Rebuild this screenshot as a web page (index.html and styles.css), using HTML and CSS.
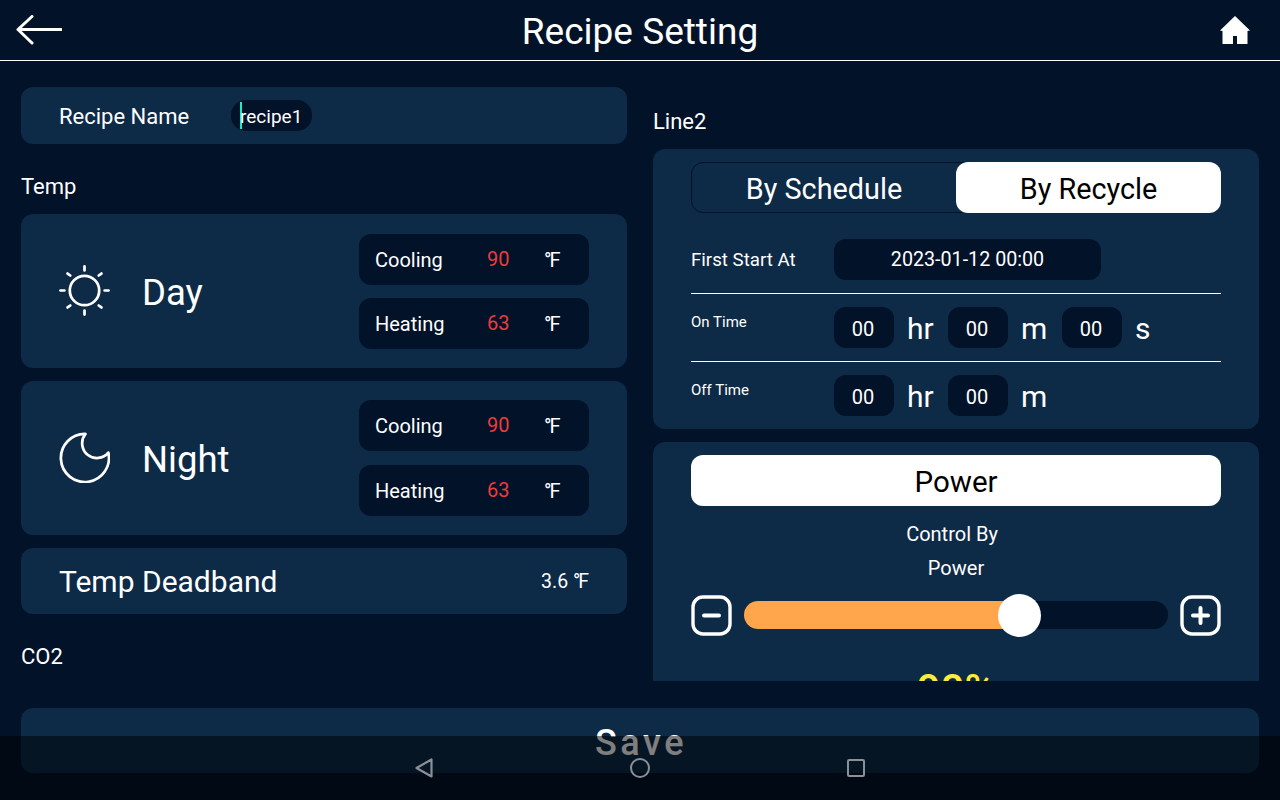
FILE: index.html
```html
<!DOCTYPE html>
<html lang="en">
<head>
    <meta charset="UTF-8">
    <title>Recipe Setting</title>
    <link rel="stylesheet" href="styles.css">
</head>
<body>
    <header class="topbar">
        <svg class="back-icon" width="46" height="30" viewBox="0 0 46 30">
            <path d="M45 14.500H2M16 1.500L2 14.500L16 28" fill="none" stroke="#fff" stroke-width="3" stroke-linecap="round" stroke-linejoin="round"/>
        </svg>
        <h1 class="title">Recipe Setting</h1>
        <svg class="home-icon" width="30" height="28" viewBox="0 0 30 28">
            <path d="M15 0L30 14.500L27.500 15V28H17V20H13V28H2.500V15L0 14.500Z" fill="#fff"/>
        </svg>
    </header>

    <main class="content">
        <section class="column left-column">
            <div class="card name-card">
                <span class="name-label">Recipe Name</span>
                <span class="name-pill"><span class="caret">recipe1</span></span>
            </div>

            <div class="section-label temp-label">Temp</div>

            <div class="card period-card">
                <svg class="period-icon" width="51" height="51" viewBox="0 0 52 52">
                    <g fill="none" stroke="#fff" stroke-width="2.800" stroke-linecap="round">
                        <circle cx="26" cy="26" r="15"/>
                        <path d="M26 1.500V5.500M26 46.500V50.500M1.500 26H5.500M46.500 26H50.500M8.700 8.700L11.500 10.700M40.500 41.300L43.300 43.300M43.300 8.700L40.500 10.700M11.500 41.300L8.700 43.300"/>
                    </g>
                </svg>
                <span class="period-name">Day</span>
                <div class="temp-pills">
                    <div class="temp-pill"><span class="temp-name">Cooling</span><span class="temp-value">90</span><span class="temp-unit">°F</span></div>
                    <div class="temp-pill"><span class="temp-name">Heating</span><span class="temp-value">63</span><span class="temp-unit">°F</span></div>
                </div>
            </div>

            <div class="card period-card night-card">
                <svg class="period-icon" width="51" height="51" viewBox="0 0 52 52">
                    <path d="M27 2A24.500 24.500 0 1 0 50.300 21A15 15 0 0 1 27 2Z" fill="none" stroke="#fff" stroke-width="2.800" stroke-linejoin="round"/>
                </svg>
                <span class="period-name">Night</span>
                <div class="temp-pills">
                    <div class="temp-pill"><span class="temp-name">Cooling</span><span class="temp-value">90</span><span class="temp-unit">°F</span></div>
                    <div class="temp-pill"><span class="temp-name">Heating</span><span class="temp-value">63</span><span class="temp-unit">°F</span></div>
                </div>
            </div>

            <div class="card deadband-card">
                <span class="deadband-name">Temp Deadband</span>
                <span class="deadband-value">3.6 <span class="temp-unit">°F</span></span>
            </div>

            <div class="section-label co2-label">CO2</div>
        </section>

        <section class="column right-column">
            <div class="section-label line-label">Line2</div>

            <div class="card schedule-card">
                <div class="toggle">
                    <span class="toggle-option">By Schedule</span>
                    <span class="toggle-option active">By Recycle</span>
                </div>
                <div class="row first-row">
                    <span class="row-label">First Start At</span>
                    <span class="date-pill">2023-01-12 00:00</span>
                </div>
                <div class="row time-row">
                    <span class="row-label small">On Time</span>
                    <span class="time-pill">00</span><span class="time-unit">hr</span>
                    <span class="time-pill">00</span><span class="time-unit">m</span>
                    <span class="time-pill">00</span><span class="time-unit">s</span>
                </div>
                <div class="row time-row">
                    <span class="row-label small">Off Time</span>
                    <span class="time-pill">00</span><span class="time-unit">hr</span>
                    <span class="time-pill">00</span><span class="time-unit">m</span>
                </div>
            </div>

            <div class="card power-card">
                <div class="power-button">Power</div>
                <div class="control-by">Control By</div>
                <div class="control-value">Power</div>
                <div class="slider-row">
                    <svg class="step-icon" width="41" height="41" viewBox="0 0 41 41">
                        <rect x="2" y="2" width="37" height="37" rx="10" fill="none" stroke="#fff" stroke-width="3.400"/>
                        <path d="M13 20.500H28" stroke="#fff" stroke-width="4" stroke-linecap="round"/>
                    </svg>
                    <div class="track">
                        <div class="fill"><span class="thumb"></span></div>
                    </div>
                    <svg class="step-icon" width="41" height="41" viewBox="0 0 41 41">
                        <rect x="2" y="2" width="37" height="37" rx="10" fill="none" stroke="#fff" stroke-width="3.400"/>
                        <path d="M13 20.500H28M20.500 13V28" stroke="#fff" stroke-width="4" stroke-linecap="round"/>
                    </svg>
                </div>
                <div class="power-percent">90%</div>
            </div>
        </section>
    </main>

    <div class="save-bar">Save</div>

    <nav class="system-nav">
        <svg width="18" height="20" viewBox="0 0 18 20">
            <path d="M16.500 1.500V18.500L1.500 10Z" fill="none" stroke="#8b9096" stroke-width="2.200" stroke-linejoin="round"/>
        </svg>
        <svg width="20" height="20" viewBox="0 0 20 20">
            <circle cx="10" cy="10" r="9" fill="none" stroke="#8b9096" stroke-width="2"/>
        </svg>
        <svg width="18" height="18" viewBox="0 0 18 18">
            <rect x="1" y="1" width="16" height="16" rx="1" fill="none" stroke="#8b9096" stroke-width="2"/>
        </svg>
    </nav>
</body>
</html>
```

FILE: styles.css
```css
body {
    font-family: 'Roboto', sans-serif;
    background-color: #011229;
    color: #fff;
    width: 1280px;
    height: 800px;
    margin: 0;
    overflow: hidden;
    position: relative;
}
.topbar {
    box-sizing: border-box;
    height: 61px;
    border-bottom: 1px solid #fff;
    display: grid;
    grid-template-columns: 1fr auto 1fr;
    align-items: center;
}
.back-icon {
    margin-left: 16px;
}
.home-icon {
    justify-self: end;
    margin-right: 30px;
}
.title {
    margin: 0;
    padding-top: 3px;
    font-size: 37px;
    font-weight: 400;
}
.content {
    height: 620px;
    overflow: hidden;
    display: flex;
    gap: 26px;
    padding: 0 21px;
}
.column {
    width: 606px;
    flex: none;
}
.card {
    background: #0d2a47;
    border-radius: 12px;
}
.section-label {
    font-size: 22px;
    display: flex;
    align-items: center;
}
.left-column {
    padding-top: 26px;
}
.name-card {
    height: 57px;
    display: flex;
    align-items: center;
    padding-left: 38px;
}
.name-label {
    width: 172px;
    padding-top: 2px;
    font-size: 22px;
}
.name-pill {
    box-sizing: border-box;
    width: 81px;
    height: 31px;
    border-radius: 15px;
    background: #011229;
    padding-left: 9px;
    font-size: 19px;
    display: flex;
    align-items: center;
}
.caret {
    border-left: 2px solid #1de9c6;
    margin-right: -2px;
    height: 27px;
    line-height: 29px;
    text-indent: -2px;
}
.temp-label {
    height: 70px;
    box-sizing: border-box;
    padding-top: 14px;
}
.period-card {
    height: 154px;
    margin-bottom: 13px;
    padding: 0 38px;
    display: flex;
    align-items: center;
}
.period-icon {
    flex: none;
    margin: 0 32px 2px 0;
}
.period-name {
    font-size: 36.5px;
    padding-top: 2px;
    flex: 1;
}
.temp-pills {
    align-self: flex-start;
    padding-top: 20px;
    display: flex;
    flex-direction: column;
    gap: 13px;
}
.night-card .temp-pills {
    padding-top: 19px;
    gap: 14px;
}
.temp-pill {
    width: 230px;
    height: 51px;
    box-sizing: border-box;
    padding: 1px 0 0 16px;
    border-radius: 12px;
    background: #011229;
    display: flex;
    align-items: center;
    font-size: 20px;
}
.temp-name {
    width: 112px;
}
.temp-value {
    width: 57px;
    color: #ee3b3b;
    padding-bottom: 3px;
}
.temp-unit {
    letter-spacing: -2px;
}
.deadband-card {
    height: 66px;
    padding: 0 38px;
    display: flex;
    align-items: center;
    justify-content: space-between;
}
.deadband-name {
    font-size: 30px;
}
.deadband-value {
    font-size: 19.5px;
    padding-right: 2px;
}
.co2-label {
    height: 84px;
}
.line-label {
    height: 88px;
    box-sizing: border-box;
    padding-top: 33px;
}
.schedule-card {
    height: 280px;
    box-sizing: border-box;
    padding: 13px 38px 0;
    margin-bottom: 13px;
}
.toggle {
    display: flex;
    height: 51px;
    box-sizing: border-box;
    border: 1px solid #011229;
    border-radius: 12px;
    margin-bottom: 13px;
}
.toggle-option {
    width: 264px;
    flex: none;
    font-size: 28.8px;
    padding-top: 2px;
    display: flex;
    align-items: center;
    justify-content: center;
}
.toggle-option.active {
    width: 265px;
    background: #fff;
    color: #000;
    border-radius: 12px;
    margin: -1px -1px -1px 0;
}
.row {
    display: flex;
    align-items: center;
    padding-top: 13px;
    height: 41px;
    padding-bottom: 13px;
    border-bottom: 1px solid #fff;
}
.row:last-child {
    border-bottom: none;
}
.row-label {
    width: 143px;
    flex: none;
    font-size: 18.7px;
}
.row-label.small {
    font-size: 15px;
    padding-bottom: 11px;
}
.date-pill {
    width: 267px;
    height: 41px;
    border-radius: 12px;
    background: #011229;
    font-size: 19.7px;
    display: flex;
    align-items: center;
    justify-content: center;
}
.time-pill {
    width: 60px;
    height: 41px;
    flex: none;
    box-sizing: border-box;
    padding: 2px 2px 0 0;
    border-radius: 12px;
    background: #011229;
    font-size: 20px;
    display: flex;
    align-items: center;
    justify-content: center;
}
.time-unit {
    width: 54px;
    flex: none;
    box-sizing: border-box;
    padding: 2px 0 0 13px;
    font-size: 30px;
}
.power-card {
    height: 300px;
    box-sizing: border-box;
    padding: 13px 38px 0;
}
.power-button {
    height: 51px;
    box-sizing: border-box;
    padding-top: 2px;
    border-radius: 12px;
    background: #fff;
    color: #000;
    font-size: 29.5px;
    display: flex;
    align-items: center;
    justify-content: center;
}
.control-by {
    text-align: center;
    font-size: 20px;
    line-height: 34px;
    margin-top: 11px;
    padding-right: 8px;
}
.control-value {
    text-align: center;
    font-size: 20px;
    line-height: 34px;
}
.slider-row {
    display: flex;
    align-items: center;
    gap: 12px;
    margin-top: 10px;
}
.step-icon {
    flex: none;
}
.track {
    flex: 1;
    height: 28px;
    margin-bottom: 1px;
    border-radius: 14px;
    background: #011229;
}
.fill {
    width: 65%;
    height: 100%;
    background: #ffa64d;
    border-radius: 14px 0 0 14px;
    position: relative;
}
.thumb {
    position: absolute;
    right: -21px;
    top: -7px;
    width: 43px;
    height: 43px;
    border-radius: 50%;
    background: #fff;
}
.power-percent {
    text-align: center;
    color: #ffeb3b;
    font-size: 42px;
    font-weight: 500;
    margin-top: 29px;
}
.save-bar {
    height: 65px;
    box-sizing: border-box;
    padding: 4px 0 0 2px;
    margin: 27px 21px 0;
    border-radius: 12px;
    background: #0d2a47;
    color: #fff;
    font-size: 36px;
    font-weight: 500;
    letter-spacing: 3.5px;
    display: flex;
    align-items: center;
    justify-content: center;
}
.system-nav {
    position: absolute;
    left: 0;
    right: 0;
    bottom: 0;
    height: 64px;
    background: rgba(0, 0, 0, 0.5);
    display: flex;
    align-items: center;
    justify-content: center;
    gap: 197px;
}
```
